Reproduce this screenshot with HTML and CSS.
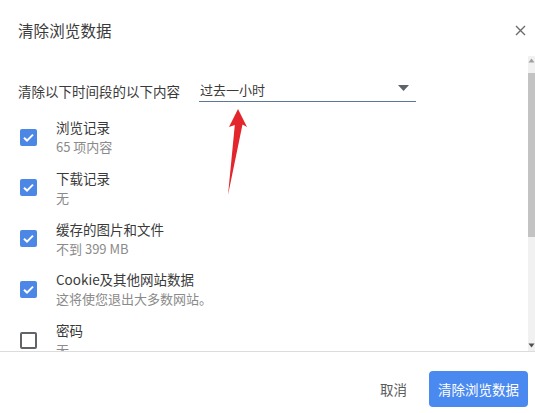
FILE: index.html
```html
<!DOCTYPE html>
<html lang="zh-CN">
<head>
<meta charset="utf-8">
<title>清除浏览数据</title>
<link rel="stylesheet" href="styles.css">
</head>
<body>
<div class="dialog">
  <header class="header">
    <h1 class="title">清除浏览数据</h1>
    <button class="close" aria-label="关闭">
      <svg width="11" height="11" viewBox="0 0 11 11"><path d="M1 1L10 10M10 1L1 10" stroke="#6b6b6b" stroke-width="1.4" fill="none"/></svg>
    </button>
  </header>
  <div class="body">
    <div class="content">
      <div class="range-row">
        <span class="range-label">清除以下时间段的以下内容</span>
        <div class="select">
          <span class="select-text">过去一小时</span>
          <svg class="select-caret" width="11" height="6" viewBox="0 0 11 6"><path d="M0 0H11L5.5 6Z" fill="#5f6368"/></svg>
        </div>
      </div>
      <ul class="items">
        <li class="item">
          <span class="cb checked"><svg width="17" height="17" viewBox="0 0 17 17"><path d="M4 8.8L7 11.6L13 5.6" stroke="#fff" stroke-width="2" fill="none"/></svg></span>
          <div class="item-text"><div class="item-title">浏览记录</div><div class="item-sub">65 项内容</div></div>
        </li>
        <li class="item">
          <span class="cb checked"><svg width="17" height="17" viewBox="0 0 17 17"><path d="M4 8.8L7 11.6L13 5.6" stroke="#fff" stroke-width="2" fill="none"/></svg></span>
          <div class="item-text"><div class="item-title">下载记录</div><div class="item-sub">无</div></div>
        </li>
        <li class="item">
          <span class="cb checked"><svg width="17" height="17" viewBox="0 0 17 17"><path d="M4 8.8L7 11.6L13 5.6" stroke="#fff" stroke-width="2" fill="none"/></svg></span>
          <div class="item-text"><div class="item-title">缓存的图片和文件</div><div class="item-sub">不到 399 MB</div></div>
        </li>
        <li class="item">
          <span class="cb checked"><svg width="17" height="17" viewBox="0 0 17 17"><path d="M4 8.8L7 11.6L13 5.6" stroke="#fff" stroke-width="2" fill="none"/></svg></span>
          <div class="item-text"><div class="item-title">Cookie及其他网站数据</div><div class="item-sub">这将使您退出大多数网站。</div></div>
        </li>
        <li class="item">
          <span class="cb"></span>
          <div class="item-text"><div class="item-title">密码</div><div class="item-sub">无</div></div>
        </li>
      </ul>
    </div>
    <div class="scrollbar">
      <svg class="sb-arrow" width="7" height="5" viewBox="0 0 7 5"><path d="M0.5 4.5H6.5L3.5 0.5Z" fill="#a0a0a0"/></svg>
      <div class="sb-thumb"></div>
      <div class="sb-rest"></div>
      <svg class="sb-arrow" width="7" height="5" viewBox="0 0 7 5"><path d="M0.5 0.5H6.5L3.5 4.5Z" fill="#505050"/></svg>
    </div>
  </div>
  <footer class="footer">
    <button class="btn btn-cancel">取消</button>
    <button class="btn btn-primary">清除浏览数据</button>
  </footer>
  <svg class="annotation" width="30" height="90" viewBox="0 0 30 90">
    <path d="M16 0L25 18L20.5 15.5L6 86L12.8 16L7 18Z" fill="#e3262c"/>
  </svg>
</div>
</body>
</html>
```
FILE: styles.css
```css
* { box-sizing: border-box; }
html, body { margin: 0; padding: 0; background: #fff; }
body {
  font-family: "Noto Sans CJK SC", "Noto Sans", "Liberation Sans", sans-serif;
  color: #333;
  width: 535px;
  height: 413px;
  overflow: hidden;
}
.dialog {
  position: relative;
  display: flex;
  flex-direction: column;
  height: 413px;
}
.header {
  height: 56px;
  display: flex;
  align-items: center;
  justify-content: space-between;
  padding: 4px 8px 0 18px;
}
.title {
  margin: 0;
  font-size: 15.5px;
  font-weight: normal;
  color: #3a3a3a;
  letter-spacing: 0.1px;
}
.close {
  border: 0;
  background: none;
  padding: 0;
  width: 11px;
  height: 11px;
  display: flex;
  margin-right: 1px;
}
.body {
  height: 296px;
  display: flex;
  border-bottom: 1px solid #dcdcdc;
}
.content {
  flex: 1;
  overflow: hidden;
  padding: 22px 0 0 18px;
}
.range-row {
  display: flex;
  align-items: flex-end;
  height: 24px;
}
.range-label {
  font-size: 13.5px;
  line-height: 22px;
  color: #3a3a3a;
  width: 181px;
  align-self: center;
  margin-top: 1px;
}
.select {
  width: 217px;
  height: 24px;
  display: flex;
  align-items: center;
  justify-content: space-between;
  border-bottom: 1.5px solid #5d7896;
  padding: 0 7px 1px 1px;
}
.select-text {
  font-size: 13px;
  color: #3a3a3a;
}
.select-caret { margin-top: -3px; }
.items {
  list-style: none;
  margin: 15px 0 0 0;
  padding: 0;
  display: flex;
  flex-direction: column;
  gap: 10.75px;
}
.item {
  display: flex;
  align-items: center;
  height: 40px;
}
.cb {
  width: 17px;
  height: 17px;
  border-radius: 2px;
  border: 2px solid #606368;
  margin: 0 19px 0 2px;
  flex: none;
  display: flex;
}
.cb.checked {
  border: 0;
  background: #4c87e6;
}
.item-text { display: flex; flex-direction: column; }
.item-title {
  font-size: 13.5px;
  line-height: 20px;
  color: #3a3a3a;
}
.item-sub {
  font-size: 13px;
  line-height: 20px;
  color: #8a8a8a;
}
.scrollbar {
  width: 7px;
  background: #f1f1f1;
  display: flex;
  flex-direction: column;
  align-items: center;
  padding: 2px 0 3px;
}
.sb-arrow { flex: none; }
.sb-thumb {
  width: 7px;
  height: 164px;
  background: #c3c3c3;
  margin-top: 10px;
}
.sb-rest { flex: 1; }
.footer {
  flex: 1;
  display: flex;
  align-items: flex-start;
  justify-content: flex-end;
  padding: 19px 7px 0 0;
  gap: 14px;
}
.btn {
  font-family: inherit;
  font-size: 13.5px;
  height: 36px;
  border-radius: 4px;
  border: 0;
  padding: 0 8px;
  cursor: pointer;
}
.btn-cancel {
  background: none;
  color: #5a5a5a;
  padding: 0 8px 0 8px;
}
.btn-primary {
  background: #4a8af0;
  color: #fff;
  width: 99px;
  padding: 0;
}
.annotation {
  position: absolute;
  left: 222px;
  top: 109px;
}
```
